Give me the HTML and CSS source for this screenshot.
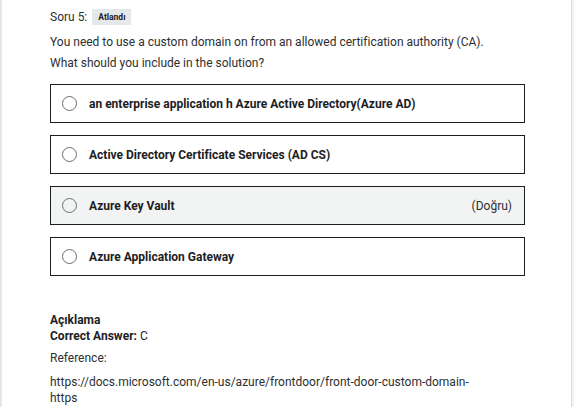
FILE: index.html
```html
<!DOCTYPE html>
<html lang="tr">
<head>
<meta charset="utf-8">
<link rel="stylesheet" href="styles.css">
</head>
<body>
<div class="page">
  <div class="content">
    <div class="q-head">
      <span class="q-num">Soru 5:</span>
      <span class="badge">Atlandı</span>
    </div>
    <div class="q-text">
      <p>You need to use a custom domain on from an allowed certification authority (CA).</p>
      <p>What should you include in the solution?</p>
    </div>
    <ul class="options">
      <li class="option"><span class="radio"></span><span class="opt-text">an enterprise application h Azure Active Directory(Azure AD)</span></li>
      <li class="option"><span class="radio"></span><span class="opt-text">Active Directory Certificate Services (AD CS)</span></li>
      <li class="option correct"><span class="radio"></span><span class="opt-text">Azure Key Vault</span><span class="tag">(Doğru)</span></li>
      <li class="option"><span class="radio"></span><span class="opt-text">Azure Application Gateway</span></li>
    </ul>
    <div class="explain">
      <h3 class="ex-title">Açıklama</h3>
      <p class="ex-answer"><b>Correct Answer:</b> C</p>
      <p class="ex-ref">Reference:</p>
      <p class="ex-url">https://docs.microsoft.com/en-us/azure/frontdoor/front-door-custom-domain-<br>https</p>
    </div>
  </div>
</div>
</body>
</html>
```
FILE: styles.css
```css
html, body {
  margin: 0;
  padding: 0;
  background: #fff;
}
body {
  font-family: Roboto, "Liberation Sans", sans-serif;
  color: #1c1d1f;
  overflow: hidden;
}
.page {
  width: 572px;
  height: 407px;
  box-sizing: border-box;
  border-left: 2px solid #e1e6eb;
  border-right: 1px solid #dcdcdc;
  box-shadow: 2px 0 2px rgba(0,0,0,0.06);
  background: #fff;
}
.content {
  padding: 8px 0 0 48px;
  width: 475px;
}
.q-head {
  display: flex;
  align-items: center;
  height: 18px;
  gap: 5px;
  font-size: 12px;
  color: #2d2f31;
}
.badge {
  background: #e4e8eb;
  color: #1c1d1f;
  font-size: 8.5px;
  font-weight: 700;
  height: 16px;
  line-height: 16px;
  padding: 0 6px;
}
.q-text {
  margin-top: 6px;
  font-size: 12px;
  color: #2d2f31;
  line-height: 21px;
}
.q-text p {
  margin: 0;
}
.options {
  list-style: none;
  margin: 10px 0 0;
  padding: 0;
  display: flex;
  flex-direction: column;
  gap: 12px;
}
.option {
  display: flex;
  align-items: center;
  height: 39px;
  box-sizing: border-box;
  border: 1px solid #1c1d1f;
  padding: 0 12px 0 11px;
}
.option.correct {
  background: #f2f4f4;
}
.radio {
  width: 15px;
  height: 15px;
  box-sizing: border-box;
  border: 1px solid #6a6f73;
  border-radius: 50%;
  flex: none;
}
.opt-text {
  margin-left: 12px;
  font-size: 12px;
  font-weight: 700;
  flex: 1;
}
.tag {
  font-size: 12px;
  color: #2d2f31;
}
.explain {
  margin-top: 36px;
}
.ex-title {
  margin: 0;
  font-size: 12px;
  font-weight: 700;
  line-height: 16px;
}
.ex-answer {
  margin: 0;
  font-size: 12px;
  line-height: 16px;
}
.ex-ref {
  margin: 6px 0 0;
  font-size: 12px;
  line-height: 16px;
  color: #2d2f31;
}
.ex-url {
  margin: 8px 0 0;
  font-size: 12px;
  line-height: 16px;
  color: #2d2f31;
}
```
